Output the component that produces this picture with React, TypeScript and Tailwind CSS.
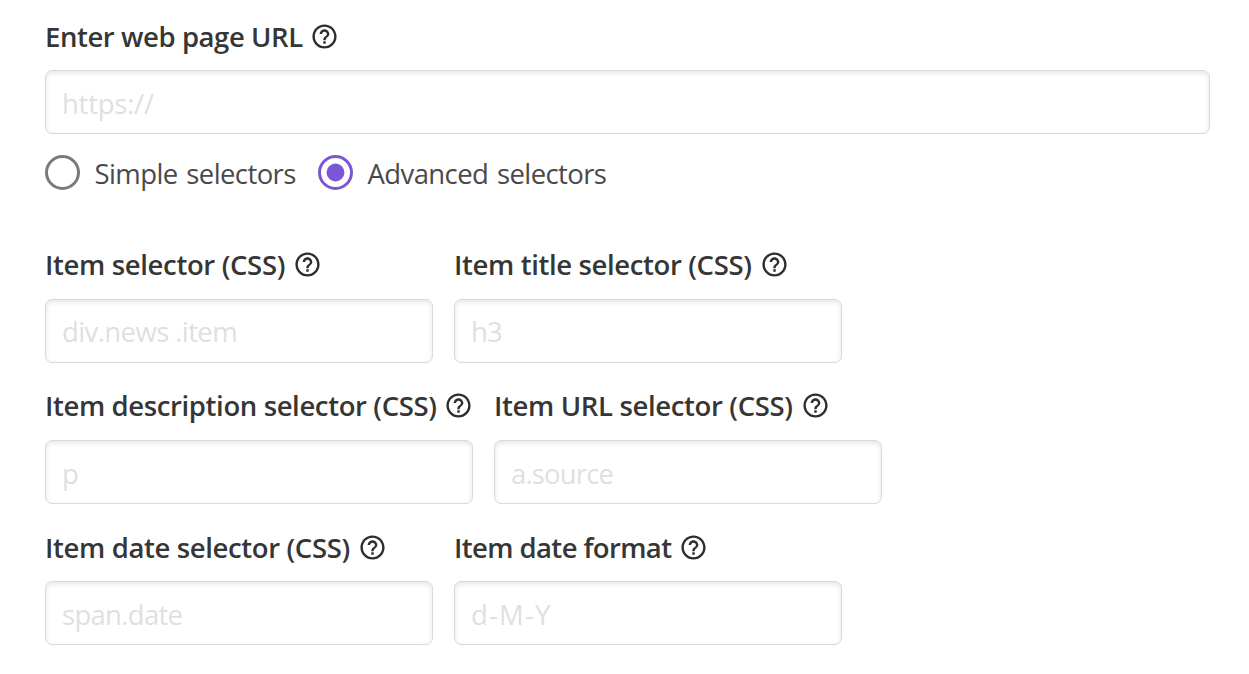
import { useState } from "react";
import { MdHelpOutline } from "react-icons/md";

type FieldProps = {
  label: string;
  placeholder: string;
  width: string;
  labelStyle: string;
  inputStyle: string;
  gap?: string;
};

function Field({ label, placeholder, width, labelStyle, inputStyle, gap = "gap-[14px]" }: FieldProps) {
  return (
    <label className={`flex flex-col ${gap} ${width}`}>
      <span className="flex h-[38px] items-center">
        <span className={`shrink-0 whitespace-nowrap font-semibold text-[#363636] ${labelStyle}`}>{label}</span>
        <MdHelpOutline className="mb-px size-[29px] shrink-0 text-[#2e2e2e]" />
      </span>
      <input
        type="text"
        placeholder={placeholder}
        className={`h-16 w-full rounded-[7px] border border-[#d9d9d9] bg-white px-4 text-[27.5px] text-[#4a4a4a] shadow-[inset_0_2px_5px_rgba(0,0,0,0.1)] outline-none placeholder:text-[#dfdfdf] ${inputStyle}`}
      />
    </label>
  );
}

type RadioProps = {
  label: string;
  checked: boolean;
  onSelect: () => void;
};

function Radio({ label, checked, onSelect }: RadioProps) {
  return (
    <label className="flex items-center">
      <input type="radio" name="mode" checked={checked} onChange={onSelect} className="sr-only" />
      <svg
        viewBox="0 0 35 35"
        className={`size-[35px] shrink-0 ${checked ? "text-[#7b57d6]" : "text-[#7a7a7a]"}`}
      >
        <circle cx="17.5" cy="17.5" r="16" fill="none" stroke="currentColor" strokeWidth="3" />
        {checked && <circle cx="17.5" cy="17.5" r="8.9" fill="currentColor" />}
      </svg>
      <span className="ml-[14.5px] mt-[3px] whitespace-nowrap text-[27.5px] tracking-[-0.6px] text-[#4a4a4a] [word-spacing:2.2px]">
        {label}
      </span>
    </label>
  );
}

export default function App() {
  const [mode, setMode] = useState("advanced");
  return (
    <main className="flex h-[674px] w-[1249px] flex-col overflow-hidden bg-white pl-[45px] pt-[18px] font-['Open_Sans','Noto_Sans',sans-serif] text-[27.5px] leading-[38px]">
      <Field
        label="Enter web page URL"
        placeholder="https://"
        width="w-[1165px]"
        labelStyle="w-[265px] tracking-[-0.42px]"
        inputStyle="pt-[3px] tracking-[-0.25px]"
      />
      <div className="mt-[21px] flex h-[35px] items-center">
        <div className="w-[273px]">
          <Radio label="Simple selectors" checked={mode === "simple"} onSelect={() => setMode("simple")} />
        </div>
        <Radio label="Advanced selectors" checked={mode === "advanced"} onSelect={() => setMode("advanced")} />
      </div>
      <div className="mt-14 flex gap-[21px]">
        <Field
          label="Item selector (CSS)"
          placeholder="div.news .item"
          width="w-[388px]"
          gap="gap-[15px]"
          labelStyle="w-[248px] tracking-[-0.35px]"
          inputStyle="pt-px tracking-[-0.6px]"
        />
        <Field
          label="Item title selector (CSS)"
          placeholder="h3"
          width="w-[388px]"
          gap="gap-[15px]"
          labelStyle="w-[306px] tracking-[-0.37px]"
          inputStyle="pt-px tracking-[-0.8px]"
        />
      </div>
      <div className="mt-6 flex gap-[21px]">
        <Field
          label="Item description selector (CSS)"
          placeholder="p"
          width="w-[428px]"
          gap="gap-[15px]"
          labelStyle="w-[399px] tracking-[-0.38px]"
          inputStyle="pt-[3px]"
        />
        <Field
          label="Item URL selector (CSS)"
          placeholder="a.source"
          width="w-[388px]"
          gap="gap-[15px]"
          labelStyle="w-[307px] tracking-[-0.35px]"
          inputStyle="pt-[3px] tracking-[-0.85px]"
        />
      </div>
      <div className="mt-[25px] flex gap-[21px]">
        <Field
          label="Item date selector (CSS)"
          placeholder="span.date"
          width="w-[388px]"
          labelStyle="w-[313px] tracking-[-0.37px]"
          inputStyle="pt-[3px] tracking-[-0.7px]"
        />
        <Field
          label="Item date format"
          placeholder="d-M-Y"
          width="w-[388px]"
          labelStyle="w-[225px] tracking-[-0.6px]"
          inputStyle="pt-[3px] tracking-[1.2px]"
        />
      </div>
    </main>
  );
}
